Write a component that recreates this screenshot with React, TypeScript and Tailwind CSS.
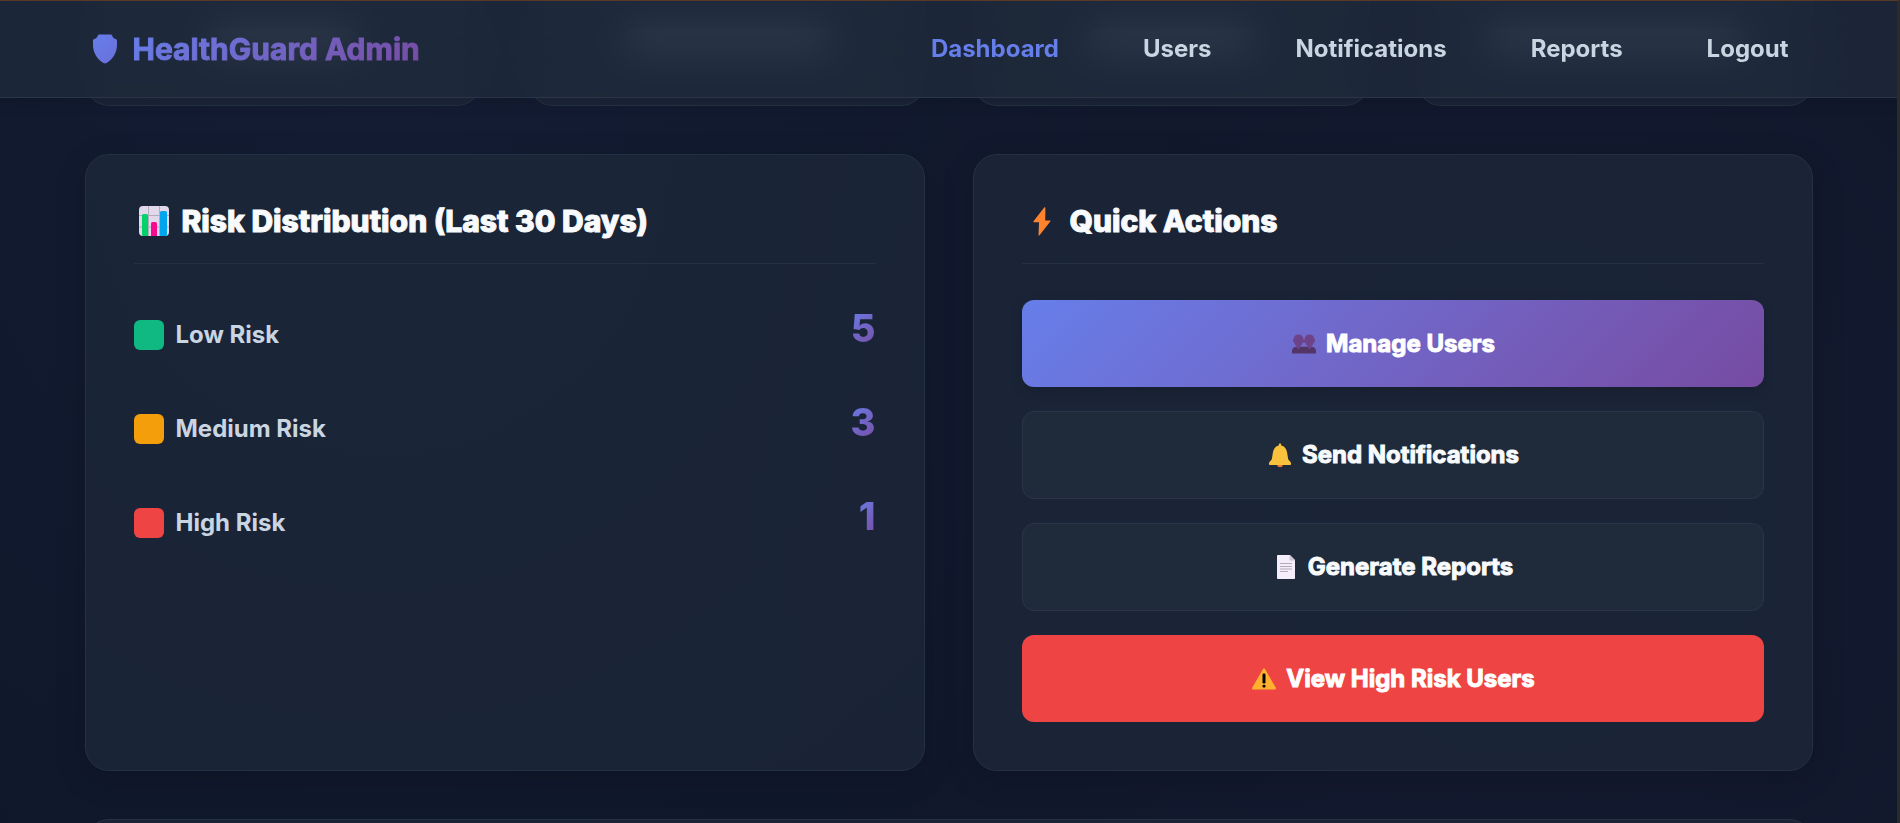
import React from 'react';
import { clsx } from 'clsx';

const NAV_LINKS = ['Dashboard', 'Users', 'Notifications', 'Reports', 'Logout'];

const RISKS = [
  { label: 'Low Risk', count: 5, color: 'bg-[#10b981]' },
  { label: 'Medium Risk', count: 3, color: 'bg-[#f59e0b]' },
  { label: 'High Risk', count: 1, color: 'bg-[#ef4444]' },
];

const STAT_WIDTHS = ['w-[150px]', 'w-[210px]', 'w-[170px]', 'w-[260px]'];

const ShieldIcon = () => (
  <svg width="24" height="30" viewBox="0 0 24 30" aria-hidden="true">
    <defs>
      <linearGradient id="shield" x1="0" y1="0" x2="1" y2="1">
        <stop offset="0" stopColor="#667eea" />
        <stop offset="1" stopColor="#6a70da" />
      </linearGradient>
    </defs>
    <path
      d="M6.5 .5h11c.9 0 1.500.4 1.800 1.200.5 1.700 1.500 2.900 3.300 3.200.9.2 1.400.7 1.400 1.600v4.500c0 7.500-4.200 14.500-10.400 18-1 .5-2.200.5-3.200 0C4.200 25.500 0 18.500 0 11V6.500c0-.9.5-1.400 1.400-1.600 1.800-.3 2.800-1.500 3.300-3.200.3-.8.900-1.200 1.800-1.200z"
      fill="url(#shield)"
    />
  </svg>
);

const ChartIcon = () => (
  <svg width="30" height="30" viewBox="0 0 30 30" aria-hidden="true">
    <rect width="30" height="30" rx="4" fill="#e1d8ec" />
    <path d="M9.500 0v30M20.500 0v30M0 9.500h30M0 21h30" stroke="#b4acbc" strokeWidth="1" />
    <path d="M3 9.500a1.500 1.500 0 0 1 1.500-1.500h3A1.500 1.500 0 0 1 9 9.500V30H4.500A1.500 1.500 0 0 1 3 28.500z" fill="#00d26a" />
    <path d="M12 17.500a1.500 1.500 0 0 1 1.500-1.500h3a1.500 1.500 0 0 1 1.500 1.500V30h-6z" fill="#f70a8d" />
    <path d="M21 6.500A1.500 1.500 0 0 1 22.500 5h4A1.500 1.500 0 0 1 28 6.500v22a1.500 1.500 0 0 1-1.500 1.500H21z" fill="#00a6ed" />
  </svg>
);

const BoltIcon = () => (
  <svg width="18" height="29" viewBox="0 0 18 29" aria-hidden="true">
    <path
      d="M11.200.5.500 14.300c-.3.500-.1 1 .5 1H6l-.5 12.600c0 .6.600.8 1 .3L17.300 14.500c.4-.5.1-1-.5-1h-4.600L12.400.8c0-.7-.8-.8-1.200-.3z"
      fill="#ff822d"
    />
  </svg>
);

const UsersIcon = () => (
  <svg width="24" height="20" viewBox="0 0 24 20" aria-hidden="true">
    <path d="M0 17c0-2.500 1.800-4.200 4.500-4.200h15c2.700 0 4.500 1.700 4.500 4.200v1.500c0 .6-.4 1-1 1H1c-.6 0-1-.4-1-1z" fill="#533566" />
    <path
      d="M6.500.5c-2.700 0-4.500 1.500-4.500 4-.8.300-1 1-1 2s.4 1.800 1.200 2c.3 1.700 1.300 3 2.600 3.700v1c0 1 .8 1.600 1.700 1.600s1.700-.6 1.700-1.600v-1c1.300-.7 2.200-2 2.600-3.700h2.400c.4 1.700 1.300 3 2.600 3.700v1c0 1 .8 1.600 1.700 1.600s1.700-.6 1.700-1.600v-1c1.300-.7 2.300-2 2.600-3.700.8-.2 1.200-1 1.200-2s-.2-1.700-1-2c0-2.500-1.800-4-4.500-4-2.600 0-4.500 1.300-4.700 4-.3.300-.5.900-.6 1.500h-.4c-.1-.6-.3-1.200-.6-1.500-.2-2.700-2.100-4-4.700-4z"
      fill="#6e4288"
    />
  </svg>
);

const BellIcon = () => (
  <svg width="24" height="25" viewBox="0 0 24 25" aria-hidden="true">
    <path d="M9 21h6c0 2-1.200 3.300-3 3.300S9 23 9 21z" fill="#f3763a" />
    <path
      d="M12 .5c-.7 0-1.200.5-1.200 1.200v.7C7.600 3 5.600 5.400 5 9l-1.200 7.200L1.500 19c-.4.500-.5.800-.5 1.300v.9c0 .6.300.8.800.8h20.400c.5 0 .8-.2.800-.8v-.9c0-.5-.1-.8-.5-1.300l-2.300-2.800L19 9c-.6-3.600-2.600-6-5.800-6.600v-.7c0-.7-.5-1.200-1.200-1.200z"
      fill="#f9c23c"
    />
  </svg>
);

const DocumentIcon = () => (
  <svg width="24" height="24" viewBox="0 0 24 24" aria-hidden="true">
    <path d="M3.800 0H16l5 5v18c0 .6-.4 1-1 1H3.800c-.5 0-.8-.4-.8-1V1c0-.6.300-1 .8-1z" fill="#f4edfa" />
    <path d="M15.500 0 21 5.500h-4.500c-.6 0-1-.4-1-1z" fill="#cdc4d6" />
    <path d="M6 8.500h12M6 11.500h12M6 14h12M6 16.500h8" stroke="#b4acbc" strokeWidth="1.200" />
  </svg>
);

const WarningIcon = () => (
  <svg width="24" height="22" viewBox="0 0 24 22" aria-hidden="true">
    <path d="M11 .9c.4-.8 1.600-.8 2 0l10.800 18.900c.4.800 0 1.700-.9 1.700H1.100c-.9 0-1.300-.9-.9-1.700z" fill="#ffb02e" />
    <rect x="10.500" y="5.500" width="3" height="10" rx="1.200" fill="#000" />
    <rect x="10.500" y="16.800" width="3" height="2.700" rx="1.200" fill="#000" />
  </svg>
);

const ACTIONS = [
  {
    label: 'Manage Users',
    icon: <UsersIcon />,
    style: 'bg-linear-135 from-[#667eea] to-[#764ba2] text-white shadow-[0_4px_12px_rgba(0,0,0,0.15)]',
  },
  { label: 'Send Notifications', icon: <BellIcon />, style: 'border border-[#2a3648] bg-[#1f2a3b] text-slate-50' },
  { label: 'Generate Reports', icon: <DocumentIcon />, style: 'border border-[#2a3648] bg-[#1f2a3b] text-slate-50' },
  { label: 'View High Risk Users', icon: <WarningIcon />, style: 'bg-[#ef4444] text-white' },
];

interface PanelProps {
  title: string;
  icon: React.ReactNode;
  children: React.ReactNode;
}

const Panel: React.FC<PanelProps> = ({ title, icon, children }) => (
  <section className="rounded-3xl border border-[#243142] bg-[#1e293b]/70 p-12 shadow-[0_8px_32px_rgba(0,0,0,0.15)]">
    <h2 className="mb-9 flex items-center gap-2 border-b border-[#243142] pb-6 text-[30px] leading-9 font-extrabold text-slate-50 [-webkit-text-stroke:1px]">
      <span className="flex w-10 justify-center">{icon}</span>
      {title}
    </h2>
    {children}
  </section>
);

export default function App() {
  return (
    <div className="relative h-screen overflow-hidden border-t border-r-[3px] border-t-[#5a3a26] border-r-[#2b2b2b] bg-[#0f172a] bg-[radial-gradient(circle_at_20%_20%,rgba(102,126,234,0.05),transparent_50%),radial-gradient(circle_at_80%_60%,rgba(118,75,162,0.06),transparent_50%)] font-['Inter',sans-serif] [font-optical-sizing:none]">
      <header className="absolute inset-x-0 top-0 z-10 border-b border-[#2a3648] bg-[#1e293b]/80 shadow-[0_4px_16px_rgba(0,0,0,0.12)] backdrop-blur-[20px]">
        <div className="mx-auto flex h-24 max-w-[1824px] items-center justify-between px-12">
          <a href="#home" className="flex items-center gap-2 text-[30px] leading-10 font-bold [-webkit-text-stroke:1px]">
            <span className="flex w-10 justify-center">
              <ShieldIcon />
            </span>
            <span className="bg-linear-135 from-[#667eea] to-[#764ba2] bg-clip-text text-transparent">HealthGuard Admin</span>
          </a>
          <nav className="flex gap-9">
            {NAV_LINKS.map((link, i) => (
              <a
                key={link}
                href={`#${link.toLowerCase()}`}
                className={clsx('px-6 text-2xl leading-9 font-bold', i === 0 ? 'text-[#667eea]' : 'text-slate-300')}
              >
                {link}
              </a>
            ))}
          </nav>
        </div>
      </header>

      <main className="mx-auto flex max-w-[1824px] flex-col gap-12 px-12">
        {/* Tail of the stat cards, scrolled under the header */}
        <div className="grid grid-cols-4 gap-12">
          {STAT_WIDTHS.map((width) => (
            <div key={width} className="flex h-[105px] justify-center rounded-b-3xl border border-t-0 border-[#243142] bg-[#1e293b]/70 pt-7">
              <div className={clsx('h-5 rounded-full bg-slate-400', width)} />
            </div>
          ))}
        </div>

        <div className="grid grid-cols-2 gap-12">
          <Panel title="Risk Distribution (Last 30 Days)" icon={<ChartIcon />}>
            <ul className="flex flex-col gap-10 pt-2">
              {RISKS.map(({ label, count, color }) => (
                <li key={label} className="flex items-center justify-between">
                  <span className="flex items-center gap-3 text-2xl font-bold text-slate-300">
                    <span className={clsx('size-[30px] rounded-md', color)} />
                    {label}
                  </span>
                  <span className="mb-3.5 bg-linear-135 from-[#667eea] to-[#764ba2] bg-clip-text text-[38px] leading-10 font-extrabold text-transparent">
                    {count}
                  </span>
                </li>
              ))}
            </ul>
          </Panel>

          <Panel title="Quick Actions" icon={<BoltIcon />}>
            <div className="flex flex-col gap-6">
              {ACTIONS.map(({ label, icon, style }) => (
                <button
                  key={label}
                  type="button"
                  className={clsx(
                    'flex min-h-[87px] items-center justify-center gap-2 rounded-xl py-6 text-2xl leading-[38px] font-bold [-webkit-text-stroke:1px]',
                    style,
                  )}
                >
                  <span className="flex w-7 justify-center">{icon}</span>
                  {label}
                </button>
              ))}
            </div>
          </Panel>
        </div>

        <div className="h-24 rounded-3xl border border-[#243142] bg-[#1e293b]/70" />
      </main>
    </div>
  );
}
